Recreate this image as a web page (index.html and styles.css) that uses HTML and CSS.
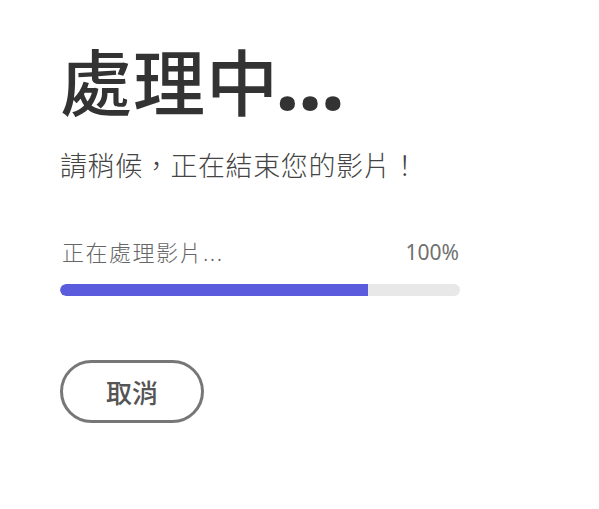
FILE: index.html
```html
<!DOCTYPE html>
<html lang="zh-Hant">
<head>
<meta charset="utf-8">
<link rel="stylesheet" href="styles.css">
</head>
<body>
<main class="panel">
  <h1 class="title">處理中<span class="dots">...</span></h1>
  <p class="subtitle">請稍候，正在結束您的影片！</p>
  <div class="progress">
    <div class="progress-head">
      <span class="progress-label">正在處理影片...</span>
      <span class="progress-value">100%</span>
    </div>
    <div class="track"><div class="fill" style="width: 77%"></div></div>
  </div>
  <button class="cancel" type="button">取消</button>
</main>
</body>
</html>
```
FILE: styles.css
```css
html, body {
  margin: 0;
  padding: 0;
  background: #ffffff;
}
body {
  font-family: "Noto Sans", "Noto Sans CJK TC", sans-serif;
}
.panel {
  display: flex;
  flex-direction: column;
  align-items: flex-start;
  padding: 36px 0 0 60px;
  width: 400px;
}
.title {
  margin: 0;
  font-size: 72px;
  line-height: 92px;
  font-weight: 500;
  color: #333333;
  letter-spacing: 1px;
}
.dots {
  font-size: 88px;
  line-height: 0;
  letter-spacing: -2px;
  font-weight: 700;
  margin-left: -4px;
}
.subtitle {
  margin: 19px 0 0 0;
  font-size: 27px;
  line-height: 38px;
  font-weight: 300;
  color: #444444;
  letter-spacing: 0.6px;
}
.progress {
  margin-top: 53px;
  width: 400px;
}
.progress-head {
  display: flex;
  justify-content: space-between;
  align-items: center;
  font-size: 21px;
  line-height: 28px;
  font-weight: 300;
  color: #666666;
}
.progress-label {
  font-size: 22px;
  letter-spacing: 1.5px;
  margin-left: 2px;
}
.progress-value {
  font-weight: 400;
  color: #707070;
  margin-right: 1px;
}
.track {
  margin-top: 18px;
  height: 12px;
  border-radius: 6px;
  background: #e8e8e8;
  overflow: hidden;
}
.fill {
  height: 100%;
  background: #5b5bdd;
  border-radius: 6px 0 0 6px;
}
.cancel {
  margin-top: 64px;
  width: 144px;
  height: 63px;
  border: 3.5px solid #777777;
  border-radius: 32px;
  background: #ffffff;
  font-family: "Noto Sans CJK TC", sans-serif;
  font-size: 26px;
  font-weight: 500;
  color: #555555;
  padding: 0;
}
```
